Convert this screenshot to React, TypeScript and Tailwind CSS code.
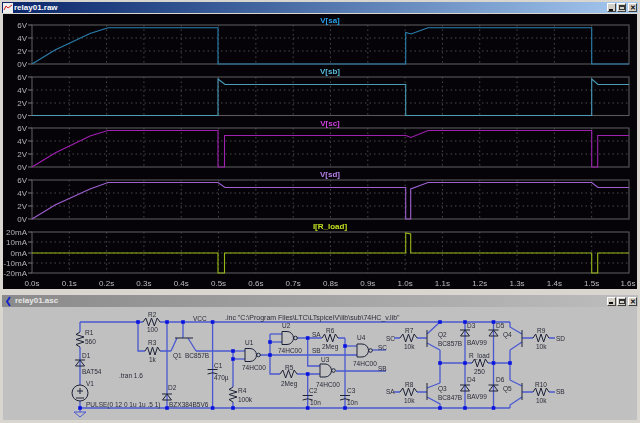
const X = (t: number) => 32 + t * 373.1;
const panes = [
  { top: 25, bottom: 64, mids: [38, 51], labels: [["6V", 25], ["4V", 38], ["2V", 51], ["0V", 64]] },
  { top: 77, bottom: 115.5, mids: [90, 103], labels: [["6V", 77], ["4V", 90], ["2V", 103], ["0V", 115.5]] },
  { top: 128, bottom: 167, mids: [141, 154], labels: [["6V", 128], ["4V", 141], ["2V", 154], ["0V", 167]] },
  { top: 180, bottom: 219, mids: [193, 206], labels: [["6V", 180], ["4V", 193], ["2V", 206], ["0V", 219]] },
  { top: 232, bottom: 273, mids: [242, 253, 263], labels: [["20mA", 232], ["10mA", 242], ["0mA", 253], ["-10mA", 263], ["-20mA", 273]] },
] as const;
const traces = [
  { c: "#2a80b0", p: "32,64 55,50 90,33.5 108,27.7 218,27.7 218,64 405.7,64 405.7,32.5 411,34 428,27.7 591.7,27.7 591.7,64 629,64" },
  { c: "#4a9cb8", p: "32,115.5 218,115.5 218,79 225,84.5 405.7,84.5 405.7,115.5 591.7,115.5 591.7,79 598,84.5 629,84.5" },
  { c: "#a020b0", p: "32,167 55,153 90,136 108,130.5 218,130.5 218,167 224.5,167 224.5,135.5 405.7,135.5 411,137.5 428,130.5 591.7,130.5 591.7,167 597.7,167 597.7,135.5 629,135.5" },
  { c: "#a060d0", p: "32,219 55,205 90,189 108,182.5 218,182.5 225,187.5 405.7,187.5 405.7,219 410.7,219 410.7,189 428,182.5 591.7,182.5 598,187.5 629,187.5" },
  { c: "#98b818", p: "32,253 218,253 218,273 224.5,273 224.5,253 405.7,253 405.7,233 410.7,234 410.7,253 591.7,253 591.7,273 597.7,273 597.7,253 629,253" },
];
const titles = [
  { t: "V[sa]", y: 20, c: "#2aa0e8" },
  { t: "V[sb]", y: 71, c: "#58bcd8" },
  { t: "V[sc]", y: 123, c: "#d040e0" },
  { t: "V[sd]", y: 174, c: "#b880e8" },
  { t: "I[R_load]", y: 226, c: "#c0e020" },
];

function Waveforms() {
  const ticks = Array.from({ length: 17 }, (_, i) => i);
  return (
    <svg width="640" height="289" viewBox="0 0 640 289" className="block blur-[0.35px]">
      <rect x="3" y="14" width="634" height="275" fill="#050308" />
      {panes.map((p, i) => (
        <g key={i}>
          {ticks.slice(1, 16).map((k) => (
            <line key={k} x1={X(k / 10)} x2={X(k / 10)} y1={p.top} y2={p.bottom} stroke="#484848" strokeDasharray="1.5 3" />
          ))}
          {p.mids.map((y) => (
            <line key={y} x1="32" x2="629" y1={y} y2={y} stroke="#484848" strokeDasharray="1.5 3" />
          ))}
          <rect x="32" y={p.top} width="597" height={p.bottom - p.top} fill="none" stroke="#585858" strokeWidth="1.1" />
          {p.labels.map(([l, y]) => (
            <g key={l}>
              <line x1="28" x2="32" y1={y} y2={y} stroke="#777" />
              <text x="27" y={y + 3} textAnchor="end" fill="#b4b4b4" fontSize="8" fontFamily="Liberation Sans">{l}</text>
            </g>
          ))}
        </g>
      ))}
      {traces.map((t) => (
        <polyline key={t.c} points={t.p} fill="none" stroke={t.c} strokeWidth="1.1" />
      ))}
      {titles.map((t) => (
        <text key={t.t} x="330" y={t.y + 3} textAnchor="middle" fill={t.c} fontSize="8" fontWeight="700" fontFamily="Liberation Sans">{t.t}</text>
      ))}
      {ticks.map((k) => (
        <text key={k} x={X(k / 10) - (k === 16 ? 1 : 0)} y="286" textAnchor="middle" fill="#bcbcbc" fontSize="8" fontFamily="Liberation Sans">{(k / 10).toFixed(1)}s</text>
      ))}
    </svg>
  );
}

function Res({ x, y, w = 16, v = false }: { x: number; y: number; w?: number; v?: boolean }) {
  const n = 6;
  const pts: string[] = [];
  for (let i = 0; i <= n; i++) {
    const a = (i / n) * w;
    const b = i === 0 || i === n ? 0 : i % 2 ? -4 : 4;
    pts.push(v ? `${x + b},${y + a}` : `${x + a},${y + b}`);
  }
  return <polyline points={pts.join(" ")} fill="none" stroke="#1d2238" strokeWidth="1" />;
}

function Cap({ x, y }: { x: number; y: number }) {
  return (
    <g stroke="#1d2238" fill="none">
      <line x1={x - 5} x2={x + 5} y1={y - 1.5} y2={y - 1.5} />
      <path d={`M${x - 5} ${y + 3} Q${x} ${y + 0.5} ${x + 5} ${y + 3}`} />
    </g>
  );
}

function Diode({ x, y }: { x: number; y: number }) {
  return (
    <g stroke="#1d2238" fill="none">
      <line x1={x - 5} x2={x + 5} y1={y - 3} y2={y - 3} />
      <path d={`M${x} ${y - 3} L${x - 4.5} ${y + 3} H${x + 4.5} Z`} />
    </g>
  );
}

function Gate({ x, y }: { x: number; y: number }) {
  return (
    <g stroke="#1d2238" fill="none">
      <path d={`M${x} ${y - 6.5} H${x + 5} A6.5 6.5 0 0 1 ${x + 5} ${y + 6.5} H${x} Z`} />
      <circle cx={x + 13.5} cy={y} r="1.8" />
    </g>
  );
}

const wires = [
  "M80 322H143M160 322H510", "M80 322V332M80 347V408", "M80 408H510", "M80 408V412",
  "M138 322V351H145M160 351H171", "M167 322V408", "M212.6 322V408",
  "M183 322V338", "M196 351H233", "M233 351V387M233 402V408", "M233 359H245", "M233 351H245",
  "M260 355H357", "M270 334V374H280M297 374H320", "M270 334H282", "M270 342H282",
  "M297 338H322M338 338H345", "M307.7 338V366H320", "M307.7 374V408", "M345 338V408", "M345 346H357",
  "M336 371H386", "M372 350H386", "M394 338H400M417 338H427", "M394 392H400M417 392H427",
  "M440 350V383", "M465 322V408", "M493.5 322V408", "M440 363H472M488 363H510", "M510 350V380",
  "M522 338H533M549 338H555", "M522 392H533M549 392H555",
  "M177 338L171 351M188 338L196 351",
  "M427 334L440 322M427 343L440 350", "M427 388L440 383M427 397L440 404V408",
  "M522 334L510 327V322M522 342L510 350", "M522 386L510 380M522 397L510 405V408",
];
const dots = [
  [138, 322], [167, 322], [183, 322], [212.6, 322], [440, 322], [465, 322], [493.5, 322],
  [80, 408], [167, 408], [212.6, 408], [233, 408], [307.7, 408], [345, 408], [440, 408], [465, 408], [493.5, 408],
  [233, 351], [233, 359], [270, 355], [270, 342], [307.7, 338], [307.7, 374], [345, 346],
  [440, 363], [465, 363], [493.5, 363], [510, 363],
];
const labels: [string, number, number][] = [
  ["R1", 85, 335], ["560", 85, 344], ["D1", 82, 358], ["BAT54", 82, 374], ["V1", 86, 386],
  ["PULSE(0 12 0 1u 1u .5 1)", 86, 406.5], [".tran 1.6", 119, 378], ["R2", 148, 317], ["100", 147, 331.5],
  ["R3", 148, 345], ["1k", 149, 361.5], ["Q1", 173, 357.5], ["BC857B", 185, 358], ["VCC", 193, 320.5],
  ["D2", 168, 390], ["BZX384B5V6", 169, 406.5], ["C1", 214, 368], ["470µ", 214, 380], ["R4", 238, 392.5], ["100k", 238, 401.5],
  [".inc \"C:\\Program Files\\LTC\\LTspiceIV\\lib\\sub\\74HC_v.lib\"", 225, 319.5],
  ["U1", 245, 344.5], ["74HC00", 242, 370], ["U2", 282, 327.5], ["74HC00", 278, 353], ["U3", 321, 361.5], ["74HC00", 316, 386.5],
  ["U4", 357, 340], ["74HC00", 353, 365.5], ["R5", 285, 370], ["2Meg", 281, 386], ["R6", 326, 332.5], ["2Meg", 322, 348.5],
  ["SA", 312, 336.5], ["SB", 312, 353], ["SC", 378, 349.5], ["SB", 378, 370.5], ["C2", 309, 392.5], ["10n", 310, 404.5], ["C3", 347, 392.5], ["10n", 347, 404.5],
  ["SC", 386, 340.5], ["SA", 386, 394], ["R7", 405, 332.5], ["10k", 404, 348.5], ["R8", 405, 386.5], ["10k", 404, 402.5],
  ["Q2", 438, 336.5], ["BC857B", 438, 346], ["Q3", 438, 390.5], ["BC847B", 438, 400], ["D3", 467, 328], ["BAV99", 467, 344.5],
  ["D4", 467, 382], ["BAV99", 467, 398.5], ["R_load", 469, 358], ["250", 474, 373.5], ["D5", 496, 328], ["D6", 496, 382],
  ["Q4", 503, 336.5], ["Q5", 503, 390.5], ["R9", 537, 332.5], ["10k", 536, 348.5], ["SD", 556, 340.5], ["R10", 535, 386.5], ["10k", 536, 402.5], ["SB", 556, 394],
];

function Schematic() {
  return (
    <svg width="634" height="113" viewBox="3 307 634 113" className="block blur-[0.35px]">
      {wires.map((d) => (
        <path key={d} d={d} fill="none" stroke="#4a58d0" strokeWidth="1.3" />
      ))}
      {dots.map(([x, y]) => (
        <rect key={`${x}-${y}`} x={x - 1.8} y={y - 1.8} width="3.6" height="3.6" fill="#0a14e0" />
      ))}
      <Res x={143} y={322} w={17} /><Res x={145} y={351} w={15} /><Res x={80} y={332} w={15} v />
      <Res x={233} y={387} w={15} v /><Res x={280} y={374} w={17} /><Res x={322} y={338} w={16} />
      <Res x={400} y={338} w={17} /><Res x={400} y={392} w={17} /><Res x={472} y={363} w={16} />
      <Res x={533} y={338} w={16} /><Res x={533} y={392} w={16} />
      <Diode x={80} y={363} /><Diode x={167} y={397} /><Diode x={465} y={333} /><Diode x={465} y={388} /><Diode x={493.5} y={333} /><Diode x={493.5} y={388} />
      <Cap x={212.6} y={371} /><Cap x={307.7} y={397} /><Cap x={345} y={397} />
      <Gate x={245} y={355} /><Gate x={282} y={338} /><Gate x={320} y={370.5} /><Gate x={357} y={350.5} />
      <circle cx="80" cy="393" r="8" fill="#c0c0c0" stroke="#1d2238" />
      <path d="M80 388V394M77 391H83M76 398H84" stroke="#1d2238" fill="none" />
      <path d="M74 412H86L80 417Z" fill="none" stroke="#4a58d0" />
      <g stroke="#1d2238" fill="none">
        <path d="M175 338H193" />
        <path d="M427 330V347" />
        <path d="M427 383V400" />
        <path d="M522 330V347" />
        <path d="M522 383V400" />
      </g>
      {labels.map(([t, x, y]) => (
        <text key={`${t}-${x}-${y}`} x={x} y={y} fill="#2a2a38" fontSize={t.startsWith(".inc") ? 7 : 6.5} fontFamily="Liberation Sans">{t}</text>
      ))}
    </svg>
  );
}

function Buttons() {
  const cls = "w-[9px] h-[9px] bg-[#d4d0c8] border-t border-l border-t-white border-l-white border-r border-b border-r-[#404040] border-b-[#404040] text-[#111] flex items-center justify-center text-[7px] leading-none font-bold";
  return (
    <div className="flex items-center ml-auto mr-[1px]">
      <div className={cls}><span className="w-[4px] h-[2px] bg-[#111] mt-[4px] mr-[1px]" /></div>
      <div className={`${cls} ml-[1px]`}><span className="w-[6px] h-[5px] border border-[#333] border-t-2" /></div>
      <div className={`${cls} ml-[2px]`}>✕</div>
    </div>
  );
}

export default function App() {
  return (
    <div className="w-[640px] h-[423px] bg-[#d8d6cf] overflow-hidden flex flex-col font-['Liberation_Sans',sans-serif]">
      <div className="relative h-[289px] shrink-0">
        <Waveforms />
        <div className="absolute left-[2px] right-[2px] top-[2px] h-[11px] bg-gradient-to-r from-[#0a246a] to-[#a6caf0] flex items-center text-white text-[8px] font-bold">
          <svg width="10" height="10" viewBox="0 0 10 10" className="ml-[1px] mr-[1px] shrink-0">
            <rect width="10" height="10" fill="#eee" />
            <path d="M1 7L3 3L5 5L9 2" stroke="#d02020" fill="none" />
          </svg>
          <span>relay01.raw</span>
          <Buttons />
        </div>
      </div>
      <div className="mt-[6px] h-[12px] mx-[2px] bg-gradient-to-r from-[#8a8a8a] to-[#bdbdbd] flex items-center text-[#e8e8e8] text-[8px] font-bold shrink-0">
        <svg width="10" height="11" viewBox="0 0 10 11" className="ml-[2px] mr-[1px] shrink-0">
          <path d="M6 1L3 5.5L6 10" stroke="#1020d0" strokeWidth="1.8" fill="none" />
        </svg>
        <span>relay01.asc</span>
        <Buttons />
      </div>
      <div className="mx-[3px] h-[113px] bg-[#c0c0c0] shrink-0">
        <Schematic />
      </div>
    </div>
  );
}
